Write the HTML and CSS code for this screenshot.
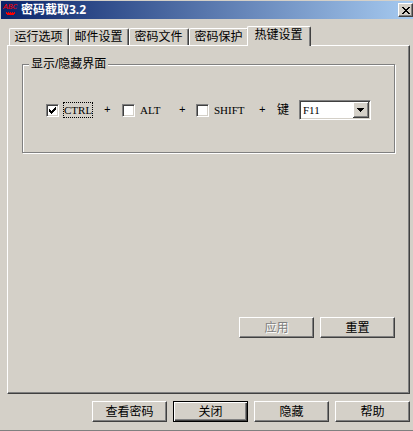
FILE: index.html
```html
<!DOCTYPE html>
<html lang="zh-CN">
<head>
    <meta charset="UTF-8">
    <meta name="viewport" content="width=device-width, initial-scale=1.0">
    <title>密码截取3.2</title>
    <link rel="stylesheet" href="styles.css">
</head>
<body>
    <div class="window">
        <header class="title-bar">
            <svg class="app-icon" width="16" height="16" viewBox="0 0 16 16" xmlns="http://www.w3.org/2000/svg">
                <text x="0" y="7" font-family="Liberation Mono" font-size="8" font-style="italic" fill="#FF0000">ABC</text>
                <path d="M3 10h1v1h1v-1h1v1h1v-1h1v1h1v-1h1v1h1v-1h1v2h-1v1H4v-1H3z" fill="#FF0000" shape-rendering="crispEdges"/>
            </svg>
            <h1 class="title">密码截取3.2</h1>
            <button class="close-btn" type="button" aria-label="关闭窗口">
                <svg width="8" height="7" viewBox="0 0 8 7" shape-rendering="crispEdges">
                    <path d="M0 0h2v1h1v1h2V1h1V0h2v1H7v1H6v1H5v1h1v1h1v1h1v1H6V6H5V5H3v1H2v1H0V6h1V5h1V4h1V3H2V2H1V1H0z" fill="#000"/>
                </svg>
            </button>
        </header>

        <!-- Tabs -->
        <div class="tabs" role="tablist">
            <button class="tab" type="button" role="tab">运行选项</button>
            <button class="tab" type="button" role="tab">邮件设置</button>
            <button class="tab" type="button" role="tab">密码文件</button>
            <button class="tab" type="button" role="tab">密码保护</button>
            <button class="tab active" type="button" role="tab" aria-selected="true">热键设置</button>
        </div>

        <main class="panel" role="tabpanel">
            <fieldset class="group">
                <legend>显示/隐藏界面</legend>
                <div class="hotkey-row">
                    <label class="check focused"><input type="checkbox" checked><span>CTRL</span></label>
                    <span class="plus">+</span>
                    <label class="check"><input type="checkbox"><span>ALT</span></label>
                    <span class="plus">+</span>
                    <label class="check"><input type="checkbox"><span>SHIFT</span></label>
                    <span class="plus">+</span>
                    <label for="hotkey">键</label>
                    <select id="hotkey" class="key-select">
                        <option>F11</option>
                    </select>
                </div>
            </fieldset>
            <div class="panel-buttons">
                <button class="btn" type="button" disabled>应用</button>
                <button class="btn" type="button">重置</button>
            </div>
        </main>

        <footer class="footer">
            <button class="btn" type="button">查看密码</button>
            <button class="btn default" type="button">关闭</button>
            <button class="btn" type="button">隐藏</button>
            <button class="btn" type="button">帮助</button>
        </footer>
    </div>
</body>
</html>
```

FILE: styles.css
```css
* {
    box-sizing: border-box;
}

body {
    margin: 0;
    background: #d4d0c8;
    color: #000;
    font-family: "Liberation Sans", "Noto Sans CJK SC", sans-serif;
    font-size: 12px;
    line-height: 16px;
}

button,
select {
    font: inherit;
    color: inherit;
    border-radius: 0;
}

.window {
    display: flex;
    flex-direction: column;
    min-height: 100vh;
    padding: 1px 0 0 1px;
    border-bottom: 1px solid #808080;
}

/* Title bar */
.title-bar {
    display: flex;
    align-items: center;
    height: 18px;
    padding-left: 2px;
    background: linear-gradient(to right, #0a246a, #a6caf0);
}

.title {
    flex: 1;
    margin: 0 0 0 2px;
    color: #fff;
    font-family: "Noto Sans", "Noto Sans CJK SC", sans-serif;
    font-size: 12px;
    font-weight: bold;
}

.close-btn {
    display: flex;
    align-items: center;
    justify-content: center;
    width: 15px;
    height: 14px;
    padding: 0;
    background: #d4d0c8;
    border: 1px solid;
    border-color: #fff #404040 #404040 #fff;
    box-shadow: inset -1px -1px #808080;
}

/* Tabs */
.tabs {
    display: flex;
    align-items: flex-end;
    height: 26px;
    padding-left: 8px;
}

.tab {
    width: 60px;
    height: 17px;
    padding: 0 1px 0 0;
    line-height: 15px;
    white-space: nowrap;
    background: #d4d0c8;
    border: 1px solid;
    border-color: #fff #404040 transparent #fff;
    border-bottom: 0;
    border-radius: 2px 2px 0 0;
    box-shadow: inset -1px 0 #808080;
}

.tab.active {
    position: relative;
    width: 64px;
    height: 20px;
    margin: 0 0 -1px -2px;
    padding-bottom: 2px;
}

/* Panel */
.panel {
    flex: 1;
    display: flex;
    flex-direction: column;
    justify-content: space-between;
    margin: 0 3px 0 6px;
    padding: 10px 14px 55px 14px;
    border: 1px solid;
    border-color: #fff #404040 #404040 #fff;
    box-shadow: inset -1px -1px #808080;
}

.group {
    min-width: 0;
    margin: 0;
    padding: 28px 0 32px 23px;
    border: 1px solid #808080;
    box-shadow: 1px 1px #fff, inset 1px 1px #fff;
}

.group legend {
    margin-left: -17px;
    padding: 0 2px;
    background: #d4d0c8;
}

.hotkey-row {
    display: grid;
    grid-template-columns: 58px 18px 57px 17px 63px 18px 22px 72px;
    align-items: center;
}

.check {
    display: flex;
    align-items: center;
    gap: 4px;
    font-family: "Liberation Serif", serif;
    font-size: 11px;
}

.check span {
    line-height: 14px;
    border: 1px solid transparent;
}

.check.focused span {
    margin-right: -2px;
    border: 1px dotted #000;
}

.check input {
    appearance: none;
    flex: none;
    width: 13px;
    height: 13px;
    margin: 0;
    background: #fff center / 9px 9px no-repeat;
    border: 1px solid;
    border-color: #808080 #fff #fff #808080;
    box-shadow: inset 1px 1px #404040, inset -1px -1px #d4d0c8;
}

.check input:checked {
    background-image: url("data:image/svg+xml,%3Csvg xmlns='http://www.w3.org/2000/svg' viewBox='0 0 9 9' shape-rendering='crispEdges'%3E%3Cpath d='M1 3h1v1h1v1h1V4h1V3h1V2h1V1h1v3H7v1H6v1H5v1H4v1H3V7H2V6H1z'/%3E%3C/svg%3E");
}

.plus {
    font-family: "Liberation Mono", monospace;
    font-size: 11px;
}

.key-select {
    appearance: none;
    height: 20px;
    padding: 0 18px 0 3px;
    font-family: "Liberation Serif", serif;
    font-size: 11px;
    background: #fff right 1px center / 16px 16px no-repeat;
    background-image: url("data:image/svg+xml,%3Csvg xmlns='http://www.w3.org/2000/svg' viewBox='0 0 16 16' shape-rendering='crispEdges'%3E%3Cpath fill='%23404040' d='M0 0h16v16H0z'/%3E%3Cpath fill='%23fff' d='M0 0h15v15H0z'/%3E%3Cpath fill='%23808080' d='M1 1h14v14H1z'/%3E%3Cpath fill='%23d4d0c8' d='M1 1h13v13H1z'/%3E%3Cpath d='M4 6h7v1h-1v1H9v1H8v1H7V9H6V8H5V7H4z'/%3E%3C/svg%3E");
    border: 1px solid;
    border-color: #808080 #fff #fff #808080;
    box-shadow: inset 1px 1px #404040, inset -1px -1px #d4d0c8;
}

/* Buttons */
.btn {
    width: 75px;
    height: 21px;
    padding: 0;
    line-height: 18px;
    background: #d4d0c8;
    border: 1px solid;
    border-color: #fff #404040 #404040 #fff;
    box-shadow: inset -1px -1px #808080;
}

.btn.default {
    border-color: #000;
    box-shadow: inset 1px 1px #fff, inset -1px -1px #404040, inset -2px -2px #808080;
}

.btn:disabled {
    color: #808080;
    text-shadow: 1px 1px #fff;
}

.panel-buttons,
.footer {
    display: flex;
    justify-content: flex-end;
    gap: 6px;
}

.footer {
    padding: 7px 3px 8px 0;
}
```
